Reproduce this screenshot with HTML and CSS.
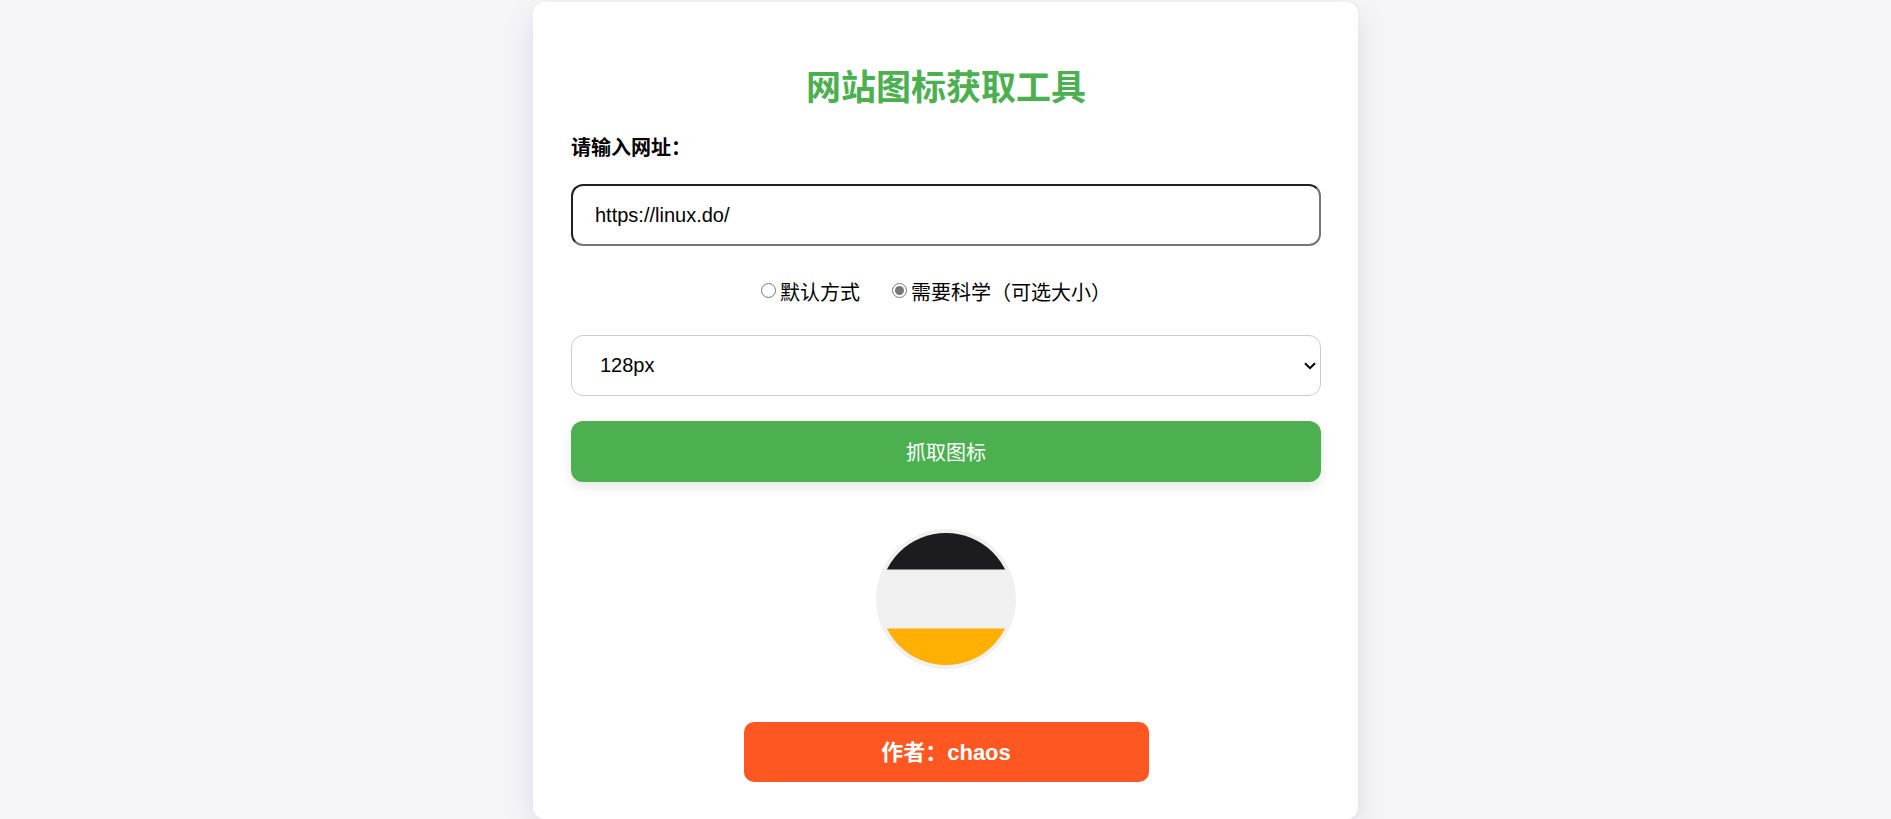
FILE: index.html
```html
<!DOCTYPE html>
<html lang="zh-CN">
<head>
  <meta charset="UTF-8">
  <meta name="viewport" content="width=device-width, initial-scale=1">
  <title>网站图标获取工具</title>
  <link rel="stylesheet" href="styles.css">
</head>
<body>
  <main class="card">
    <h1 class="title">网站图标获取工具</h1>
    <form class="form">
      <label class="url-label" for="url">请输入网址：</label>
      <input class="url-input" type="text" id="url" name="url" value="https://linux.do/">
      <div class="methods">
        <label class="method"><input class="method-radio" type="radio" name="method" value="default">默认方式</label>
        <label class="method"><input class="method-radio" type="radio" name="method" value="sized" checked>需要科学（可选大小）</label>
      </div>
      <div class="size">
        <select class="size-select" name="size" aria-label="图标大小">
          <option>16px</option>
          <option>32px</option>
          <option>64px</option>
          <option selected>128px</option>
        </select>
        <svg class="size-arrow" viewBox="0 0 12 8" aria-hidden="true">
          <path d="M1 1.2 6 6.2 11 1.2" fill="none" stroke="#000" stroke-width="2"/>
        </svg>
      </div>
      <button class="submit" type="button">抓取图标</button>
    </form>
    <svg class="site-icon" viewBox="0 0 160 160" role="img" aria-label="linux.do">
      <defs>
        <clipPath id="disc"><circle cx="80" cy="80" r="66"/></clipPath>
      </defs>
      <rect x="0.5" y="0.5" width="159" height="159" rx="32" fill="none" stroke="#fcfcfc" stroke-dasharray="3 5"/>
      <circle cx="80" cy="80" r="70" fill="#f0f0f0"/>
      <g clip-path="url(#disc)">
        <rect y="10" width="160" height="40.5" fill="#1c1c1e"/>
        <rect y="109.5" width="160" height="40" fill="#ffb003"/>
      </g>
    </svg>
    <a class="author" href="#">作者：chaos</a>
  </main>
</body>
</html>
```
FILE: styles.css
```css
* {
  box-sizing: border-box;
}

body {
  margin: 0;
  padding-top: 2px;
  background: #f4f4f9;
  color: #000;
  font-family: "Liberation Sans", "Noto Sans CJK SC", sans-serif;
  font-size: 20px;
}

.card {
  display: flex;
  flex-direction: column;
  align-items: center;
  width: 100%;
  max-width: 825px;
  margin: 0 auto;
  padding: 38px 37px 37px 38px;
  border-radius: 12px;
  background: #fff;
  box-shadow: 0 10px 30px rgba(0, 0, 0, 0.1);
}

.title {
  margin: 24px 0;
  color: #4caf50;
  font-size: 35px;
  line-height: 48px;
}

.form {
  display: flex;
  flex-direction: column;
  width: 100%;
}

.url-label {
  margin-bottom: 24px;
  font-weight: bold;
  line-height: 24px;
}

.url-input,
.size-select,
.submit {
  width: 100%;
  height: 61px;
  border-radius: 12px;
  font-family: inherit;
  font-size: 20px;
}

.url-input {
  height: 62px;
  padding: 0 22px;
  border: 2px inset #767676;
  background: #fff;
  color: #000;
}

.methods {
  display: flex;
  flex-wrap: wrap;
  justify-content: center;
  margin: 32px 0 27px;
  padding-right: 12px;
  line-height: 30px;
}

.method {
  display: flex;
  align-items: center;
  margin-right: 20px;
}

.method-radio {
  width: 15px;
  height: 15px;
  margin: 0 4px 5px 12px;
  accent-color: #767676;
}

.size {
  position: relative;
}

.size-select {
  display: block;
  padding: 0 28px 2px;
  appearance: none;
  border: 1px solid #ccc;
  background: #fff;
  color: #000;
}

.size-arrow {
  position: absolute;
  top: 27px;
  right: 5px;
  width: 12px;
  height: 8px;
  pointer-events: none;
}

.submit {
  margin-top: 25px;
  border: 0;
  background: #4caf50;
  color: #fff;
  box-shadow: 0 5px 12px rgba(0, 0, 0, 0.1);
}

.site-icon {
  width: 160px;
  height: 160px;
  margin: 37px 0 43px;
}

.author {
  width: 54%;
  padding: 16px 16px 14px;
  border-radius: 10px;
  background: #ff5722;
  color: #fff;
  font-size: 22px;
  font-weight: bold;
  line-height: 30px;
  text-align: center;
  text-decoration: none;
}
```
